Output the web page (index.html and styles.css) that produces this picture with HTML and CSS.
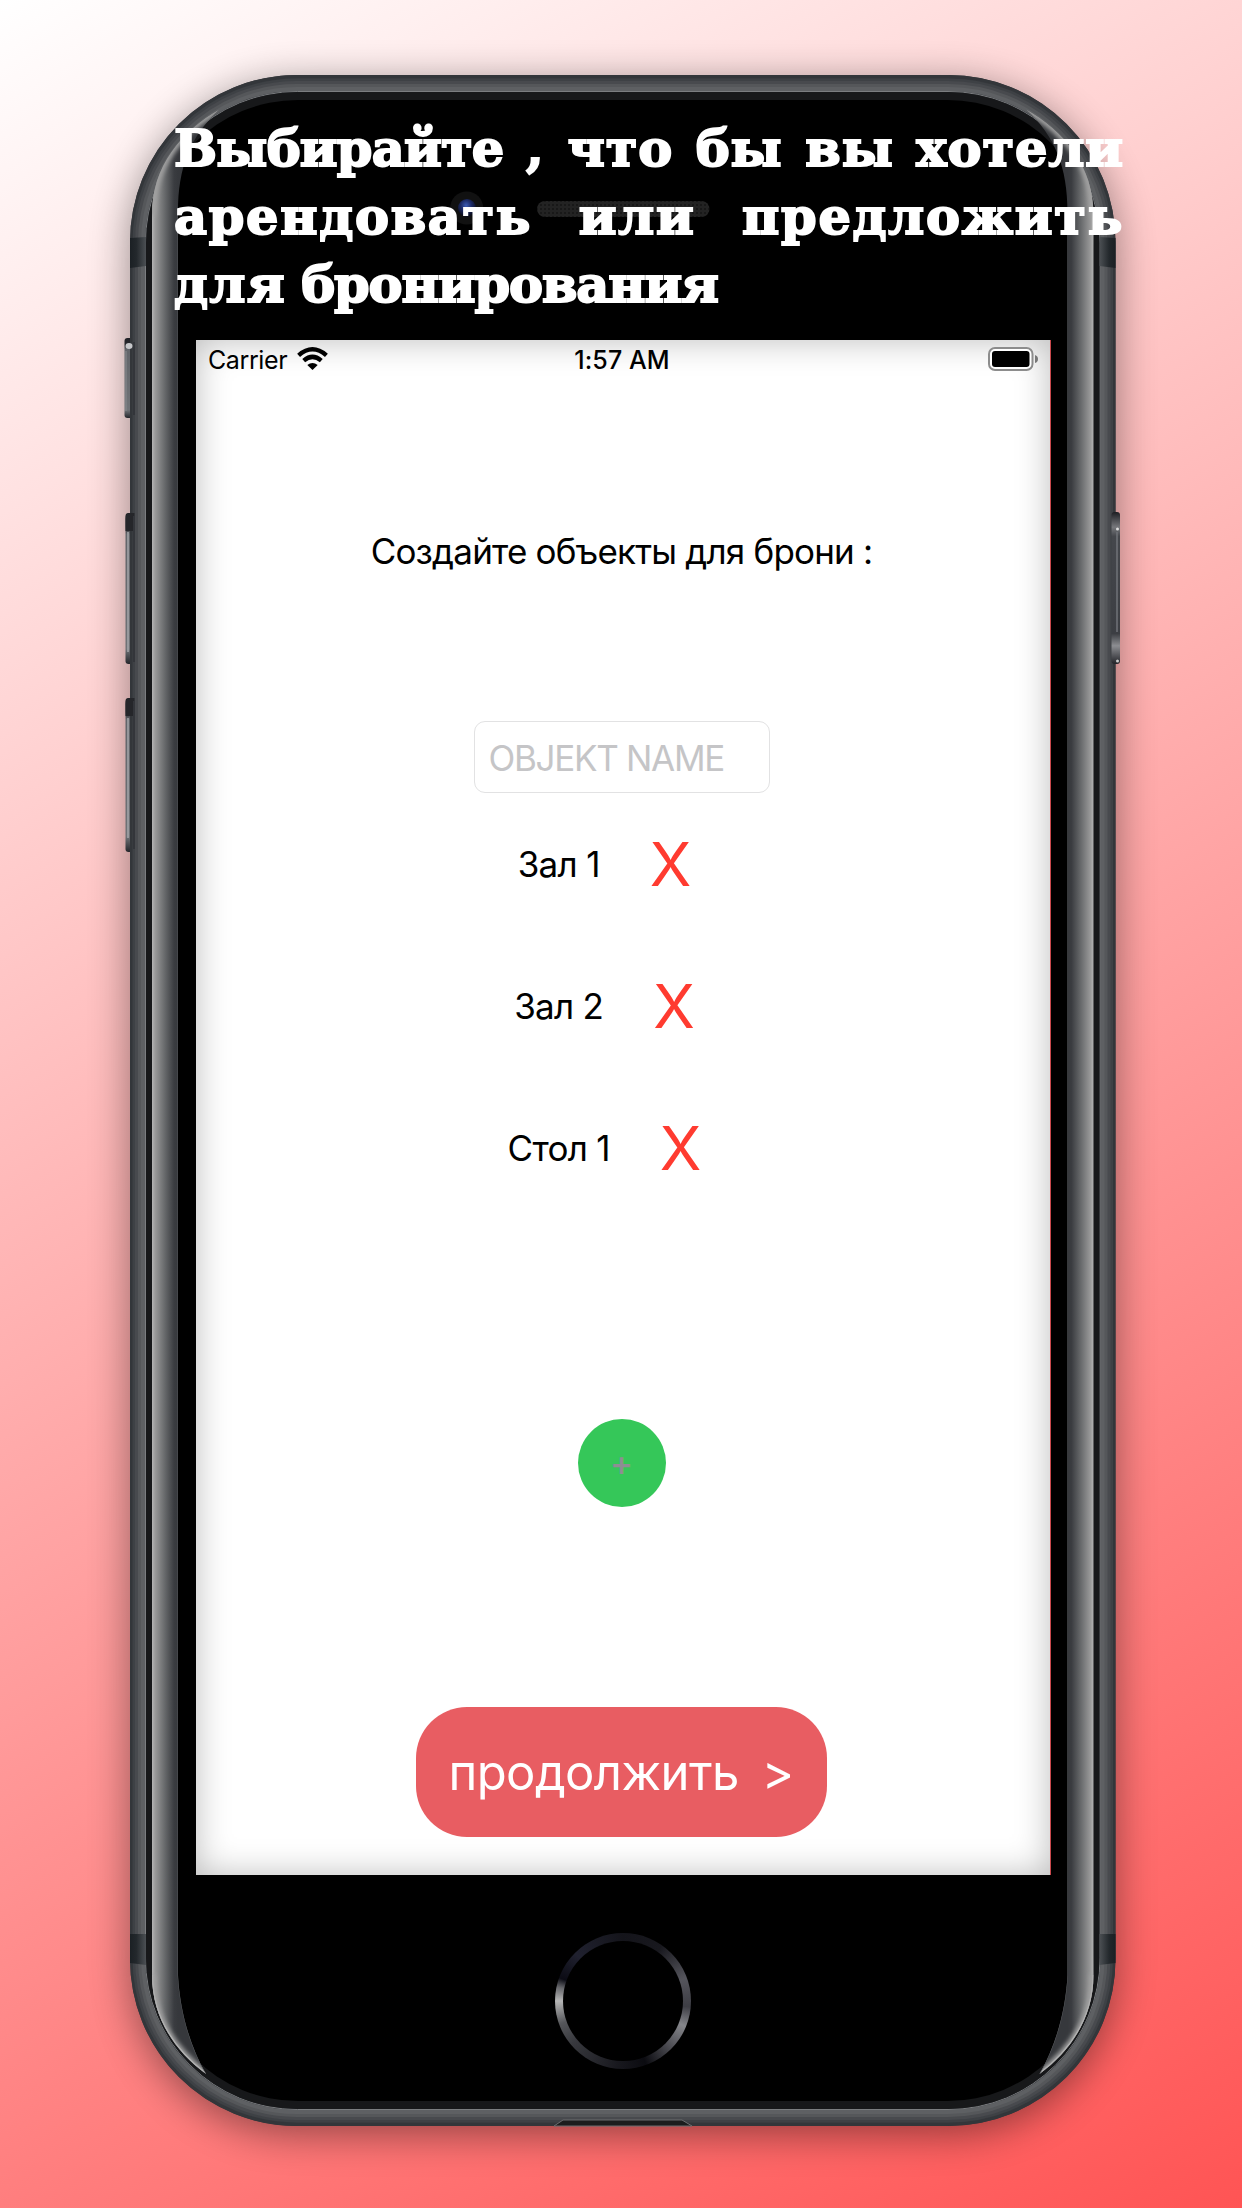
FILE: index.html
```html
<!DOCTYPE html>
<html lang="ru">
<head>
<meta charset="utf-8">
<title>Бронирование</title>
<link rel="stylesheet" href="styles.css">
</head>
<body>
<main class="poster">
  <svg class="device" viewBox="0 0 1242 2208" aria-hidden="true">
    <defs>
      <linearGradient id="glass" x1="152" x2="178" y1="0" y2="0" gradientUnits="userSpaceOnUse">
        <stop offset="0" stop-color="#b4b4b4"/><stop offset=".12" stop-color="#999"/><stop offset=".5" stop-color="#66686a"/><stop offset=".85" stop-color="#3a3c40"/><stop offset="1" stop-color="#36383c"/>
      </linearGradient>
      <linearGradient id="band" x1="130" x2="146" y1="0" y2="0" gradientUnits="userSpaceOnUse">
        <stop offset="0" stop-color="#1b2024"/><stop offset=".4" stop-color="#23282c"/><stop offset="1" stop-color="#4c5054"/>
      </linearGradient>
      <linearGradient id="key" x1="0" x2="0" y1="0" y2="1">
        <stop offset="0" stop-color="#202126"/><stop offset=".09" stop-color="#292a2f"/><stop offset=".14" stop-color="#62656a"/><stop offset=".9" stop-color="#707377"/><stop offset="1" stop-color="#25262b"/>
      </linearGradient>
      <linearGradient id="keyRight" x1="0" x2="0" y1="0" y2="1">
        <stop offset="0" stop-color="#1c1d22"/><stop offset=".1" stop-color="#77787c"/><stop offset=".16" stop-color="#45474c"/><stop offset=".8" stop-color="#3c3e43"/><stop offset=".88" stop-color="#8d8e92"/><stop offset="1" stop-color="#222328"/>
      </linearGradient>
      <radialGradient id="lens" cx=".45" cy=".35" r=".6">
        <stop offset="0" stop-color="#3c5bb4"/><stop offset=".5" stop-color="#1c2a66"/><stop offset="1" stop-color="#0b0d1c"/>
      </radialGradient>
      <pattern id="mesh" width="4" height="4" patternUnits="userSpaceOnUse">
        <rect width="4" height="4" fill="#232323"/><rect width="2" height="2" fill="#181818"/>
      </pattern>
      <filter id="shade" x="-10%" y="-10%" width="120%" height="120%"><feGaussianBlur stdDeviation="20"/></filter>
      <filter id="glow" x="-50%" width="200%"><feGaussianBlur stdDeviation="2"/></filter>
      <clipPath id="glassEdge"><path id="glassShape" d="M152 215C152 166 181 131 220 109C190 136 178 168 178 212V1975C180 2012 190 2046 206 2074C175 2051 152 2018 152 1975Z"/></clipPath>
      <g id="side">
        <path d="M130 238l16-1v29l-16 2z" fill="url(#band)"/>
        <path d="M130 1934h16v31l-16-2z" fill="url(#band)"/>
        <use href="#glassShape" fill="url(#glass)"/>
        <g clip-path="url(#glassEdge)" fill="none">
          <path d="M152 215C152 166 181 131 220 109M206 2074C175 2051 152 2018 152 1975" stroke="#a0a0a0" stroke-width="7" filter="url(#glow)"/>
          <path d="M206 2074C175 2051 152 2018 152 1975" stroke="#b0b0b0" stroke-width="2.500"/>
          <path d="M178 212V1975C180 2012 190 2046 206 2074" stroke="#55575a"/>
        </g>
      </g>
    </defs>
    <rect x="130" y="83" width="985.5" height="2051" rx="167" fill="#000" opacity=".42" filter="url(#shade)"/>
    <g fill="url(#key)">
      <rect x="124.500" y="338" width="10" height="80" rx="3"/>
      <rect x="125.500" y="513" width="9" height="151" rx="3"/>
      <rect x="125.500" y="698" width="9" height="154" rx="3"/>
    </g>
    <g fill="none" stroke-width="1">
      <rect x="130" y="75" width="985.500" height="2051" rx="167" fill="#36393d"/>
      <rect x="131.500" y="76.500" width="982.500" height="2048" rx="165.500" stroke="#33363a" stroke-width="3"/>
      <rect x="134" y="80" width="977.500" height="2041" rx="163" stroke="#3e4145" stroke-width="3"/>
      <rect x="137" y="83" width="971.500" height="2035" rx="160" stroke="#484a4e" stroke-width="4"/>
      <rect x="140" y="86" width="965.500" height="2029" rx="157" stroke="#55575a" stroke-width="4"/>
      <rect x="143" y="89" width="959.500" height="2023" rx="154" stroke="#5e6063" stroke-width="4"/>
      <rect x="145.500" y="91.500" width="954.500" height="2018" rx="152" stroke="#7b7d80"/>
    </g>
    <rect x="146" y="92" width="953.500" height="2017" rx="151" fill="#17181a"/>
    <rect x="152" y="100" width="941.500" height="2001" rx="146" fill="#000"/>
    <use href="#side"/>
    <use href="#side" transform="matrix(-1 0 0 1 1245.500 0)"/>
    <g>
      <path d="M125.500 519q0-6 4-6h5v18h-9zM125.500 704q0-6 4-6h5v18h-9z" fill="#25262a"/>
      <path d="M134 342v73M134 516v146M134 701v148" stroke="#33353a" stroke-width="2"/>
      <path d="M128 532v120M128 718v120" stroke="#a5a7aa" stroke-width="1.500"/>
      <path d="M126 351v60" stroke="#8a8c90" stroke-width="1"/>
      <ellipse cx="129" cy="346" rx="3.500" ry="3" fill="#c6c7ca"/>
      <rect x="1111.500" y="512" width="8.500" height="152" rx="3" fill="url(#keyRight)"/>
      <path d="M1117 532v100" stroke="#717378" stroke-width="1.500"/>
      <circle cx="1117.500" cy="529" r="1.500" fill="#ddd"/><circle cx="1117.500" cy="661" r="1.500" fill="#ccc"/>
    </g>
    <path d="M554 2126L563 2120H682L692 2126Z" fill="#1b1d1d" stroke="#6b6d6f"/>
    <circle cx="466.700" cy="208" r="16.500" fill="#111"/>
    <circle cx="467" cy="208" r="9" fill="url(#lens)"/>
    <rect x="537" y="201" width="172.500" height="16" rx="8" fill="url(#mesh)"/>
  </svg>

  <h1 class="headline">
    <span class="line first"><span>Выбирайте</span> <span>,</span> <span>что</span> <span>бы</span> <span>вы</span> <span>хотели</span></span>
    <span class="line second"><span>арендовать</span> <span>или</span> <span>предложить</span></span>
    <span class="line third"><span>для</span> <span>бронирования</span></span>
  </h1>

  <section class="screen">
    <header class="status">
      <span class="carrier">Carrier
        <svg class="wifi" viewBox="0 0 31 23"><g fill="none" stroke="#000" stroke-width="4.400"><path d="M1.600 8.300Q15.500 -3.700 29.400 8.300"/><path d="M6.700 13.600Q15.500 6.200 24.300 13.600"/></g><path d="M10.300 18Q15.500 13.800 20.700 18L15.500 23Z"/></svg>
      </span>
      <span class="time">1:57 AM</span>
      <svg class="battery" viewBox="0 0 51 24"><rect x="1" y="1" width="43.500" height="22" rx="6" fill="#fff" stroke="#8c8c8c" stroke-width="2"/><rect x="4" y="4" width="37.500" height="16" rx="3" fill="#000"/><path d="M47 8Q50 9 50 12T47 16Z" fill="#777"/></svg>
    </header>
    <h2 class="prompt">Создайте объекты для брони :</h2>
    <input class="field" type="text" placeholder="OBJEKT NAME">
    <ul class="objects">
      <li><span class="name">Зал 1</span><button class="remove">X</button></li>
      <li><span class="name">Зал 2</span><button class="remove">X</button></li>
      <li><span class="name">Стол 1</span><button class="remove">X</button></li>
    </ul>
    <button class="add">+</button>
    <button class="next"><span>продолжить</span><span class="arrow">&gt;</span></button>
  </section>
  <div class="home"></div>
</main>
</body>
</html>
```
FILE: styles.css
```css
* { box-sizing: border-box; }
body { margin: 0; }
button { border: 0; padding: 0; background: none; font: inherit; }

.poster {
  position: relative;
  display: flex;
  flex-direction: column;
  width: 1242px;
  height: 2208px;
  overflow: hidden;
  background: linear-gradient(150deg, #fff 0%, #ff5454 100%);
  font-family: Inter, "Liberation Sans", sans-serif;
  color: #000;
}
.device { position: absolute; inset: 0; width: 1242px; height: 2208px; }

.headline {
  position: relative;
  z-index: 2;
  height: 340px;
  margin: 0;
  padding: 114px 118px 0 174px;
  font: bold 51px/68px "DejaVu Serif", serif;
  color: #fff;
  -webkit-text-stroke: 2px #fff;
}
.line { display: flex; justify-content: space-between; white-space: nowrap; }
.first { letter-spacing: .9px; }
.first span:first-child { letter-spacing: -.8px; }
.second { letter-spacing: 1.7px; }
.third { justify-content: flex-start; gap: 15px; letter-spacing: -1.1px; }
.third span:first-child { letter-spacing: 1.5px; }

.screen {
  position: relative;
  display: flex;
  flex-direction: column;
  align-items: center;
  width: 855px;
  height: 1535px;
  margin-left: 196px;
  padding-right: 3px;
  background: #fff;
  border-right: 1px solid #c9484c;
  box-shadow: inset 0 0 34px rgba(0, 0, 0, .27);
}
.status {
  display: grid;
  grid-template-columns: 1fr auto 1fr;
  align-items: center;
  align-self: stretch;
  height: 38px;
  padding: 1px 8px 0 12px;
  font-size: 25px;
}
.carrier { display: flex; align-items: center; gap: 10px; letter-spacing: -.4px; }
.wifi { width: 31px; height: 23px; margin-top: -2px; }
.time { padding-right: 3px; font-weight: 550; letter-spacing: .1px; }
.battery { width: 51px; height: 24px; margin-top: -1px; justify-self: end; }

.prompt { margin: 151px 0 0; font-size: 35px; line-height: 44px; font-weight: 400; letter-spacing: -.8px; }
.field {
  width: 296px;
  height: 72px;
  margin-top: 148px;
  padding: 2px 14px 0;
  border: 1.500px solid #e2e2e3;
  border-radius: 11px;
  background: #fff;
  font: 35px Inter, sans-serif;
  letter-spacing: -1.3px;
}
.field::placeholder { color: #c5c5c7; opacity: 1; }
.objects { margin: 0; padding: 0 34px 0 0; list-style: none; }
.objects li { display: flex; align-items: center; justify-content: center; gap: 50px; height: 142px; }
.name { font-size: 35px; letter-spacing: -.7px; }
.remove { font-size: 61px; line-height: 70px; color: #ff3b30; }
.add {
  width: 88px;
  height: 88px;
  margin-top: 200px;
  border-radius: 50%;
  background: #35c759;
  color: #8e8e93;
  font-size: 35px;
  font-weight: 500;
}
.next {
  display: flex;
  align-items: center;
  justify-content: center;
  gap: 23px;
  width: 411px;
  height: 130px;
  margin-top: 200px;
  padding: 1px 1px 0 0;
  border-radius: 51px;
  background: #e85d62;
  color: #fff;
  font-size: 49px;
  letter-spacing: -.6px;
}
.home {
  position: relative;
  width: 136px;
  height: 136px;
  margin: 58px 0 0 555px;
  border-radius: 50%;
  background: conic-gradient(#14141a 0deg, #18181e 35deg, #55555c 70deg, #3e3e45 95deg, #85868b 112deg, #4b4b51 135deg, #0b0b10 160deg, #18181e 185deg, #38393e 230deg, #55565a 250deg, #b5b5b5 270deg, #66676b 282deg, #0b0b14 290deg, #20212f 315deg, #14141a 360deg);
}
.home::after { content: ""; position: absolute; inset: 8px; border-radius: 50%; background: #000; }
```
